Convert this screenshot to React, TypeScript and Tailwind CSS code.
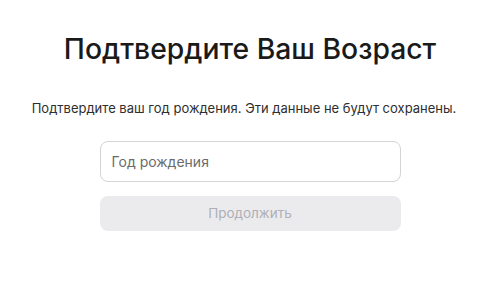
import React from 'react';

export default function App() {
  return (
    <div className="w-[500px] h-[292px] bg-white flex flex-col items-center font-['Inter',sans-serif]">
      <h1 className="mt-[31px] text-[28.3px] leading-[36px] text-[#1a1a1a] font-medium">Подтвердите Ваш Возраст</h1>

      <p className="mt-[33px] pr-[12px] text-[13px] leading-[17px] text-[#2e2e2e]">
        Подтвердите ваш год рождения. Эти данные не будут сохранены.
      </p>

      <div className="mt-[24px] w-[301px] flex flex-col gap-[14px]">
        <input
          type="text"
          placeholder="Год рождения"
          className="w-full h-[41px] rounded-lg border border-[#d4d4d8] px-[11px] text-[14px] text-[#333] placeholder:text-[#6b6b6b] outline-none"
        />
        <button className="w-full h-[35px] rounded-lg bg-[#ebebed] text-[13.5px] text-[#aeb0b5]">
          Продолжить
        </button>
      </div>
    </div>
  );
}
